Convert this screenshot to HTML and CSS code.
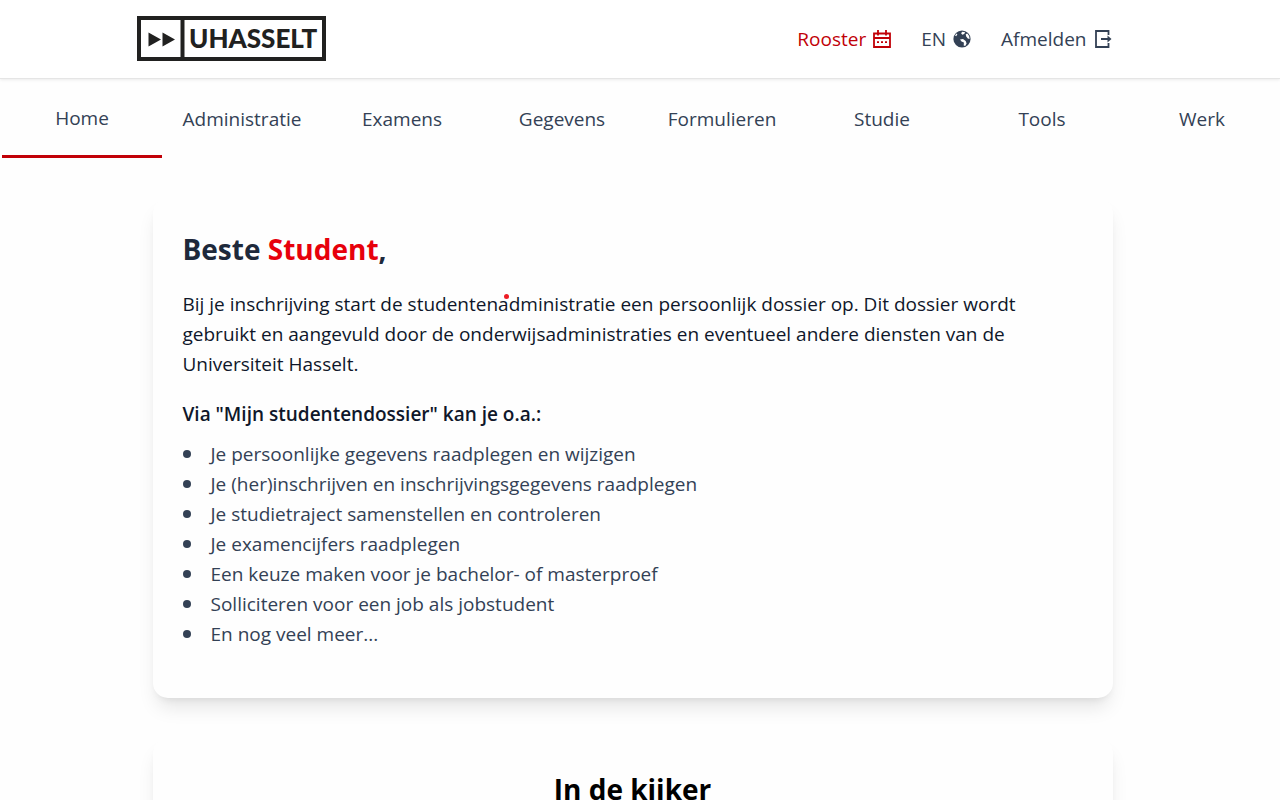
FILE: index.html
```html
<!DOCTYPE html>
<html lang="nl">
<head>
<meta charset="utf-8">
<meta name="viewport" content="width=device-width, initial-scale=1">
<title>Mijn studentendossier</title>
<link rel="stylesheet" href="styles.css">
</head>
<body>
<header class="site-header">
  <div class="header-inner">
    <a class="logo" href="#" aria-label="UHasselt">
      <svg width="189" height="45" viewBox="0 0 189 45">
        <rect x="2" y="2" width="185" height="41" fill="#fff" stroke="#212120" stroke-width="4"/>
        <path d="M45.500 2v41" stroke="#212120" stroke-width="4"/>
        <path d="M11.500 16.500v14L24 23.500zM25.500 16.500v14L38 23.500z" fill="#212120"/>
        <text class="logo-text" x="52" y="32">UHASSELT</text>
      </svg>
    </a>
    <div class="actions">
      <a class="action action-red" href="#">Rooster
        <svg class="icon" viewBox="0 0 18 18" fill="none" stroke="currentColor" stroke-width="1.800"><path d="M1 3.500h16v13.500H1zM1 8h16M5 0v5.500M13 0v5.500"/><path d="M4 12.200h2M8 12.200h2M12 12.200h2"/></svg>
      </a>
      <a class="action" href="#">EN
        <svg class="icon" viewBox="0 0 18 18"><circle cx="9" cy="9" r="8.600" fill="currentColor"/><path d="M9.200 1.700l3 .6-1 1.800-1.900.6-1.200-1.500zM12.700 4.200l1.600-.6q2.300 2 2.300 5.400l-1.800-.4-1.600-2zM7 9.600l3-.6 2.700 2 .9 2.400-1.400 2.600-1.500-.6.200-2.800-2.400-1.200zM2 5.500l1.600-2 .8.700-1.200 2z" fill="#fff"/></svg>
      </a>
      <a class="action" href="#">Afmelden
        <svg class="icon" viewBox="0 0 18 18" fill="none" stroke="currentColor" stroke-width="1.800"><path d="M14.500 5V1H2v16h12.500v-4M7 9h9"/><path d="M13.500 5.500 17.500 9l-4 3.500z" fill="currentColor" stroke="none"/></svg>
      </a>
    </div>
  </div>
</header>
<nav class="main-nav" aria-label="Hoofdmenu">
  <a class="nav-link nav-current" href="#" aria-current="page">Home</a>
  <a class="nav-link" href="#">Administratie</a>
  <a class="nav-link" href="#">Examens</a>
  <a class="nav-link" href="#">Gegevens</a>
  <a class="nav-link" href="#">Formulieren</a>
  <a class="nav-link" href="#">Studie</a>
  <a class="nav-link" href="#">Tools</a>
  <a class="nav-link" href="#">Werk</a>
</nav>
<main class="content">
  <section class="card">
    <span class="marker"></span>
    <h1 class="title">Beste <span class="name">Student</span>,</h1>
    <p class="intro">Bij je inschrijving start de studentenadministratie een persoonlijk dossier op. Dit dossier wordt gebruikt en aangevuld door de onderwijsadministraties en eventueel andere diensten van de Universiteit Hasselt.</p>
    <h2 class="subtitle">Via "Mijn studentendossier" kan je o.a.:</h2>
    <ul class="options">
      <li>Je persoonlijke gegevens raadplegen en wijzigen</li>
      <li>Je (her)inschrijven en inschrijvingsgegevens raadplegen</li>
      <li>Je studietraject samenstellen en controleren</li>
      <li>Je examencijfers raadplegen</li>
      <li>Een keuze maken voor je bachelor- of masterproef</li>
      <li>Solliciteren voor een job als jobstudent</li>
      <li>En nog veel meer...</li>
    </ul>
  </section>
  <section class="card">
    <h2 class="title title-center">In de kijker</h2>
  </section>
</main>
</body>
</html>
```
FILE: styles.css
```css
* { box-sizing: border-box; }
html { overflow-x: hidden; scrollbar-width: none; }
body {
  margin: 0;
  background: #fefefe;
  color: #334155;
  font: 19px/30px "Open Sans", "Noto Sans", sans-serif;
}
a { color: inherit; text-decoration: none; }
.site-header {
  background: #fff;
  padding: 16px 15px 17px 0;
  border-bottom: 1px solid #e5e5e5;
  box-shadow: 0 1px 3px rgba(0, 0, 0, .08);
}
.header-inner {
  max-width: 992px;
  margin: 0 auto;
  padding-right: 17px;
  display: flex;
  justify-content: space-between;
  align-items: center;
}
.logo, .logo svg { display: block; }
.logo-text { font: 900 26px "Lato", sans-serif; fill: #212120; }
.actions { display: flex; gap: 30px; }
.action { display: flex; align-items: center; gap: 7px; }
.action-red { color: #c10007; }
.icon { width: 18px; height: 18px; }
.main-nav {
  display: grid;
  grid-template-columns: repeat(8, 1fr);
  padding-left: 2px;
  margin-right: -2px;
}
.nav-link { padding: 25px 0 24px; text-align: center; }
.nav-current { padding: 24px 0 22px; border-bottom: 3px solid #c10007; }
.content {
  display: flex;
  flex-direction: column;
  gap: 40px;
  max-width: 975px;
  margin: 0 auto;
  padding: 40px 15px 40px 0;
}
.card {
  position: relative;
  padding: 31px 30px 49px;
  background: #fefefe;
  border-radius: 15px;
  box-shadow: 0 13px 19px -4px rgba(0, 0, 0, .1), 0 5px 8px -5px rgba(0, 0, 0, .1);
}
.title { margin: 0 0 20px; font-size: 28px; line-height: 40px; color: #1e293b; }
.name { color: #e7000b; }
.title-center { text-align: center; color: #000; }
.intro { margin: 0 0 20px; color: #0f172a; }
.subtitle { margin: 0 0 10px; font-size: 19px; font-weight: 600; color: #0f172a; }
.options { margin: 0; padding: 0; list-style: none; }
.options li { display: flex; align-items: center; gap: 20px; }
.options li::before {
  content: "";
  width: 8px;
  height: 8px;
  border-radius: 50%;
  background: #334155;
}
.marker {
  position: absolute;
  left: 351px;
  top: 96px;
  width: 5px;
  height: 5px;
  border-radius: 50%;
  background: #ed1c24;
}
```
